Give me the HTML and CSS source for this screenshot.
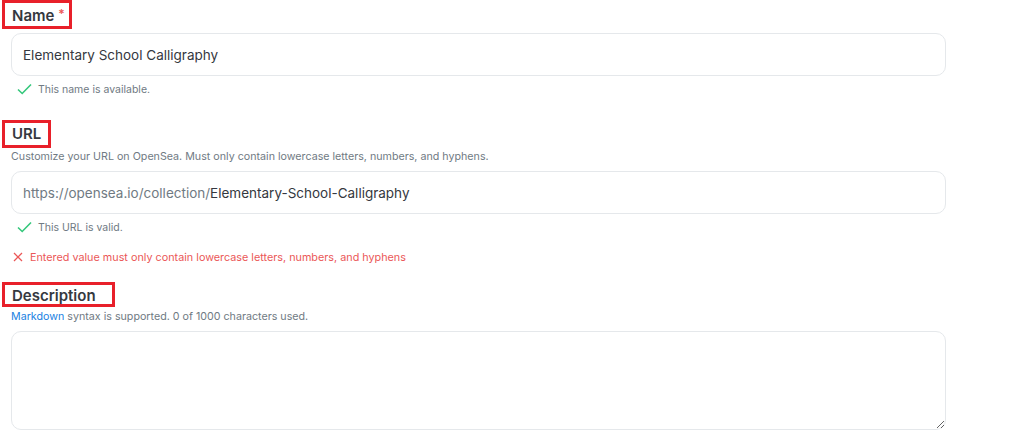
FILE: index.html
```html
<!DOCTYPE html>
<html>
<head>
  <title>Create collection</title>
  <link rel="stylesheet" href="styles.css">
</head>
<body>
  <form class="form">
    <div class="field">
      <div class="mark mark-name"><label class="label">Name <span class="req">*</span></label></div>
      <div class="input"><span class="value">Elementary School Calligraphy</span></div>
      <div class="hint ok">
        <svg width="15" height="12" viewBox="0 0 15 12"><path d="M1 6.5 L5.2 10.5 L14 1.5" fill="none" stroke="#34c77b" stroke-width="1.6"/></svg>
        This name is available.
      </div>
    </div>

    <div class="field field-url">
      <div class="mark mark-url"><label class="label">URL</label></div>
      <p class="desc">Customize your URL on OpenSea. Must only contain lowercase letters, numbers, and hyphens.</p>
      <div class="input"><span class="prefix">https://opensea.io/collection/</span><span class="value">Elementary-School-Calligraphy</span></div>
      <div class="hint ok">
        <svg width="15" height="12" viewBox="0 0 15 12"><path d="M1 6.5 L5.2 10.5 L14 1.5" fill="none" stroke="#34c77b" stroke-width="1.6"/></svg>
        This URL is valid.
      </div>
      <div class="hint err">
        <svg width="10" height="10" viewBox="0 0 10 10"><path d="M1 1 L9 9 M9 1 L1 9" stroke="#eb5757" stroke-width="1.3"/></svg>
        Entered value must only contain lowercase letters, numbers, and hyphens
      </div>
    </div>

    <div class="field field-desc">
      <div class="mark mark-desc"><label class="label">Description</label></div>
      <p class="desc"><a href="#" class="link">Markdown</a> syntax is supported. 0 of 1000 characters used.</p>
      <textarea class="textarea"></textarea>
    </div>
  </form>
</body>
</html>
```

FILE: styles.css
```css
body {
  margin: 0;
  font-family: Inter, "Open Sans", sans-serif;
  color: #353840;
  background: #fff;
}
.form {
  width: 935px;
  padding-left: 11px;
}
.field { display: flex; flex-direction: column; }
.mark {
  border: 3px solid #e8202a;
  margin-left: -9px;
  padding: 2px 0 0 7px;
  box-sizing: border-box;
  height: 29px;
}
.mark-name { width: 70px; }
.mark-url { width: 49px; height: 28px; padding-top: 0; }
.mark-desc { width: 113px; height: 25px; padding-top: 0; }
.label {
  font-size: 15px;
  line-height: 18px;
  font-weight: 600;
  color: #353840;
}
.req { color: #eb5757; font-size: 12px; vertical-align: top; }
.input {
  margin-top: 4px;
  height: 43px;
  border: 1px solid #e5e8eb;
  border-radius: 10px;
  box-sizing: border-box;
  display: flex;
  align-items: center;
  padding-left: 11px;
  font-size: 13.5px;
}
.value { color: #353840; }
.prefix { color: #707a83; }
.hint {
  display: flex;
  align-items: center;
  gap: 6px;
  font-size: 10.5px;
  color: #707a83;
  margin-top: 6px;
  padding-left: 6px;
  height: 14px;
}
.err { color: #eb5757; gap: 7px; padding-left: 2px; margin-top: 16px; font-size: 10.8px; }
.field-url { margin-top: 24px; }
.field-desc { margin-top: 18px; }
.desc {
  margin: 2px 0 0;
  font-size: 10.7px;
  color: #707a83;
}
.field-url .input { margin-top: 8px; }
.field-desc .desc { margin-top: 3px; }
.link { color: #2081e2; text-decoration: none; }
.textarea {
  margin-top: 8px;
  height: 99px;
  border: 1px solid #e5e8eb;
  border-radius: 10px;
  box-sizing: border-box;
  resize: vertical;
  font-family: inherit;
}
```
